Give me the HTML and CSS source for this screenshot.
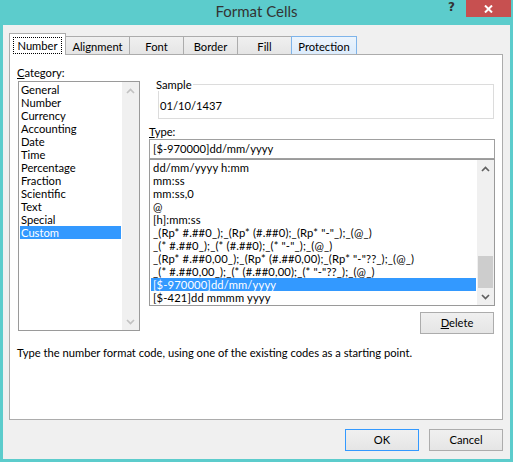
FILE: index.html
```html
<!DOCTYPE html>
<html>
<head>
<meta charset="utf-8">
<title>Format Cells</title>
<link rel="stylesheet" href="styles.css">
</head>
<body>
<div class="window">
  <div class="titlebar">
    <div></div>
    <div class="title">Format Cells</div>
    <div class="caption">
      <span class="help">?</span>
      <span class="close"><svg width="9" height="8" viewBox="0 0 9 8"><path d="M1 0.5 L8 7.5 M8 0.5 L1 7.5" stroke="#fff" stroke-width="2" fill="none"/></svg></span>
    </div>
  </div>
  <div class="client">
    <div class="tabs">
      <div class="tab active t-number"><span class="focus">Number</span></div>
      <div class="tab t-align">Alignment</div>
      <div class="tab t-font">Font</div>
      <div class="tab t-border">Border</div>
      <div class="tab t-fill">Fill</div>
      <div class="tab hover t-prot">Protection</div>
    </div>
    <div class="panel">
      <div class="columns">
        <div class="left">
          <div class="label cat-label"><u>C</u>ategory:</div>
          <div class="listbox cat">
            <div class="items">
              <div class="row">General</div>
              <div class="row">Number</div>
              <div class="row">Currency</div>
              <div class="row">Accounting</div>
              <div class="row">Date</div>
              <div class="row">Time</div>
              <div class="row">Percentage</div>
              <div class="row">Fraction</div>
              <div class="row">Scientific</div>
              <div class="row">Text</div>
              <div class="row">Special</div>
              <div class="row sel">Custom</div>
            </div>
            <div class="scrollbar disabled">
              <div class="sb-btn"><svg width="9" height="6" viewBox="0 0 9 6"><path d="M1 5 L4.5 1.5 L8 5" fill="none" stroke="currentColor" stroke-width="1.7"/></svg></div>
              <div class="sb-track"></div>
              <div class="sb-btn"><svg width="9" height="6" viewBox="0 0 9 6"><path d="M1 1 L4.5 4.5 L8 1" fill="none" stroke="currentColor" stroke-width="1.7"/></svg></div>
            </div>
          </div>
        </div>
        <div class="right">
          <div class="group">
            <span class="legend">Sample</span>
            <div class="sample">01/10/1437</div>
          </div>
          <div class="label type-label"><u>T</u>ype:</div>
          <div class="input">[$-970000]dd/mm/yyyy</div>
          <div class="listbox types">
            <div class="items">
              <div class="row">dd/mm/yyyy h:mm</div>
              <div class="row">mm:ss</div>
              <div class="row">mm:ss,0</div>
              <div class="row">@</div>
              <div class="row">[h]:mm:ss</div>
              <div class="row">_(Rp* #.##0_);_(Rp* (#.##0);_(Rp* "-"_);_(@_)</div>
              <div class="row">_(* #.##0_);_(* (#.##0);_(* "-"_);_(@_)</div>
              <div class="row">_(Rp* #.##0,00_);_(Rp* (#.##0,00);_(Rp* "-"??_);_(@_)</div>
              <div class="row">_(* #.##0,00_);_(* (#.##0,00);_(* "-"??_);_(@_)</div>
              <div class="row sel">[$-970000]dd/mm/yyyy</div>
              <div class="row">[$-421]dd mmmm yyyy</div>
            </div>
            <div class="scrollbar">
              <div class="sb-btn"><svg width="9" height="6" viewBox="0 0 9 6"><path d="M1 5 L4.5 1.5 L8 5" fill="none" stroke="currentColor" stroke-width="1.7"/></svg></div>
              <div class="sb-track"><div class="sb-thumb"></div></div>
              <div class="sb-btn"><svg width="9" height="6" viewBox="0 0 9 6"><path d="M1 1 L4.5 4.5 L8 1" fill="none" stroke="currentColor" stroke-width="1.7"/></svg></div>
            </div>
          </div>
          <div class="btn-row"><button class="btn"><u>D</u>elete</button></div>
        </div>
      </div>
      <p class="desc">Type the number format code, using one of the existing codes as a starting point.</p>
    </div>
    <div class="footer">
      <button class="btn default">OK</button>
      <button class="btn">Cancel</button>
    </div>
  </div>
</div>
</body>
</html>
```

FILE: styles.css
```css
* { box-sizing: border-box; }
html, body { margin: 0; padding: 0; }
body {
  width: 513px;
  height: 462px;
  overflow: hidden;
  background: #5ccccc;
  font-family: Lato, "Noto Sans", sans-serif;
  font-size: 11.2px;
  color: #000;
}
u { text-decoration: underline; text-underline-offset: 1px; }

.window { display: flex; flex-direction: column; height: 462px; }

.titlebar {
  height: 25px;
  display: grid;
  grid-template-columns: 1fr auto 1fr;
}
.title {
  font-size: 15px;
  line-height: 22px;
  color: #333;
}
.caption {
  display: flex;
  justify-content: flex-end;
  align-items: flex-start;
}
.help {
  font-family: "DejaVu Sans", sans-serif;
  font-weight: bold;
  font-size: 12px;
  line-height: 12px;
  color: #333;
  margin-right: 11px;
  margin-top: 1px;
}
.close {
  width: 45px;
  height: 17px;
  background: #c75050;
  margin-right: 2px;
  display: flex;
  align-items: center;
  justify-content: center;
}

.client {
  flex: 1;
  margin: 0 3px 3px;
  background: #f0f0f0;
  padding: 8px 7px 0 6px;
}

.tabs {
  height: 21px;
  display: flex;
  align-items: flex-end;
  position: relative;
  z-index: 2;
}
.tab {
  height: 18px;
  margin-left: -1px;
  border: 1px solid #acacac;
  border-bottom: none;
  background: linear-gradient(#f0f0f0, #e5e5e5);
  display: flex;
  align-items: center;
  justify-content: center;
  line-height: 13px;
  padding-top: 1px;
}
.tab.hover {
  background: linear-gradient(#ecf4fc, #dcecfc);
  border-color: #7eb4ea;
  position: relative;
  z-index: 1;
}
.tab.active {
  height: 22px;
  margin-left: 0;
  margin-bottom: -1px;
  background: #fff;
  align-items: flex-start;
  justify-content: flex-start;
  padding: 3px 0 0 3px;
  position: relative;
  z-index: 2;
}
.focus {
  width: 49px;
  height: 17px;
  border: 1px dotted #000;
  display: flex;
  align-items: center;
  justify-content: center;
}
.t-number { width: 57px; }
.t-align { width: 65px; }
.t-font, .t-border, .t-fill { width: 55px; }
.t-prot { width: 66px; }

.panel {
  height: 366px;
  border: 1px solid #acacac;
  background: #fff;
  padding: 11px 0 0 8px;
  position: relative;
  z-index: 1;
}

.columns { display: flex; align-items: flex-start; }
.left { width: 122px; }
.right { width: 346px; margin-left: 9px; }

.label { line-height: 13px; height: 13px; }
.cat-label { margin-left: -1px; margin-bottom: 2px; }

.listbox {
  border: 1px solid #9a9a9a;
  display: flex;
  background: #fff;
}
.listbox.cat { height: 250px; }
.listbox.types { height: 147px; }
.items {
  flex: 1;
  padding: 1px;
  overflow: hidden;
}
.row {
  height: 13px;
  line-height: 13px;
  padding-left: 1px;
  white-space: pre;
  overflow: hidden;
}
.types .row { padding-left: 2px; letter-spacing: 0.15px; }
.row.sel { background: #3399ff; color: #fff; }

.scrollbar {
  width: 17px;
  background: #f0f0f0;
  display: flex;
  flex-direction: column;
  color: #606060;
}
.scrollbar.disabled { color: #c2c2c2; }
.sb-btn {
  height: 17px;
  display: flex;
  align-items: center;
  justify-content: center;
}
.sb-track {
  flex: 1;
  display: flex;
  flex-direction: column;
  justify-content: flex-end;
  align-items: center;
}
.sb-thumb {
  width: 15px;
  height: 32px;
  background: #cdcdcd;
}

.group {
  position: relative;
  margin: 18px 1px 0 9px;
  height: 35px;
  border: 1px solid #dcdcdc;
  padding: 14px 0 0 1px;
}
.legend {
  position: absolute;
  top: -7px;
  left: -4px;
  line-height: 13px;
  padding: 0 1px;
  background: #fff;
}
.sample { line-height: 13px; }

.type-label { margin-top: 6px; }
.input {
  margin-top: 1px;
  height: 20px;
  border: 1px solid #a0a0a0;
  padding-left: 3px;
  line-height: 18px;
  white-space: pre;
}

.btn-row {
  display: flex;
  justify-content: flex-end;
  margin-top: 6px;
  padding-right: 1px;
}
.btn {
  width: 74px;
  height: 22px;
  border: 1px solid #acacac;
  background: linear-gradient(#f0f0f0, #e5e5e5);
  font-family: inherit;
  font-size: 11.2px;
  color: #000;
  padding: 0;
  margin: 0;
  line-height: 18px;
}
.btn.default { border-color: #3399ff; }

.desc {
  margin: 12px 0 0 -1px;
  line-height: 14px;
}

.footer {
  display: flex;
  justify-content: flex-end;
  gap: 10px;
  margin-top: 9px;
}
```
